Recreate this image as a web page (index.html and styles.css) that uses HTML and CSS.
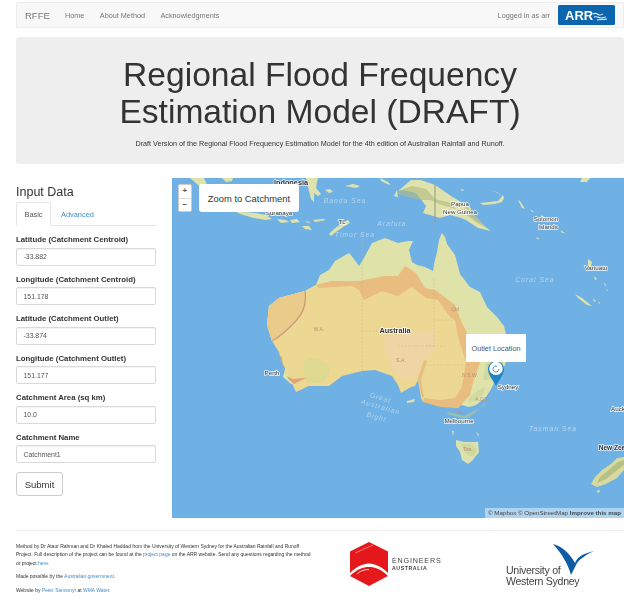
FILE: index.html
```html
<!DOCTYPE html>
<html lang="en">
<head>
<meta charset="utf-8">
<title>RFFE</title>
<link rel="stylesheet" href="styles.css">
</head>
<body>
<div class="page">
  <nav class="navbar">
    <a class="brand">RFFE</a>
    <a class="nav-link">Home</a>
    <a class="nav-link">About Method</a>
    <a class="nav-link">Acknowledgments</a>
    <span class="login">Logged in as arr</span>
    <a class="arr-logo">
      <svg width="57" height="20" viewBox="0 0 57 20">
        <rect width="57" height="20" rx="1.5" fill="#0d66ad"/>
        <text x="7" y="14.5" class="arr-text">ARR</text>
        <path d="M35 9c3-2 5 1 7 1s2-1 3-1M36 12c3-1 5 1 7 1s3-1 5-1M39 15c3-1 6 0 10-1" fill="none" stroke="#dbe9f5" stroke-width="1.2"/>
      </svg>
    </a>
  </nav>

  <header class="jumbotron">
    <h1>Regional Flood Frequency<br>Estimation Model (DRAFT)</h1>
    <p>Draft Version of the Regional Flood Frequency Estimation Model for the 4th edition of Australian Rainfall and Runoff.</p>
  </header>

  <main class="content">
    <section class="sidebar">
      <h3>Input Data</h3>
      <div class="tabs">
        <a class="tab active">Basic</a>
        <a class="tab">Advanced</a>
      </div>
      <form class="form">
        <label>Latitude (Catchment Centroid)</label>
        <div class="input">-33.882</div>
        <label>Longitude (Catchment Centroid)</label>
        <div class="input">151.178</div>
        <label>Latitude (Catchment Outlet)</label>
        <div class="input">-33.874</div>
        <label>Longitude (Catchment Outlet)</label>
        <div class="input">151.177</div>
        <label>Catchment Area (sq km)</label>
        <div class="input">10.0</div>
        <label>Catchment Name</label>
        <div class="input">Catchment1</div>
        <button type="button" class="submit">Submit</button>
      </form>
    </section>

    <section class="map">
      <svg class="map-svg" width="452" height="340" viewBox="172 178 452 340">
        <rect x="172" y="178" width="452" height="340" fill="#6fb1e4"/>
        <!-- Indonesia / PNG islands -->
        <g fill="#dfe2ac">
          <path d="M190 178l8 7 6 3 3-3-3-7zM222 178l4 4 6-1 1-3zM306 178l2 9 3 12 3 3 0-9 4 3 3-2-5-6 1-6 1-4zM325 190l5-1 3 3-4 1zM345 186l8-2 7 2-4 2zM380 178l8 4 3 3-4-1-6-3zM394 196l3-6 1 7zM582 178l-2 4h7l3-4z"/>
          <path d="M226 207l8 2 10 3 12 1 10 2 6 4-6 1-12-2-14-4-7-4zM277 219l9 1 3 2-8 1zM290 220l7-1 3 3-8 1zM305 221l6 1-3 1zM313 220l10-1 3 1-11 2zM302 226l7 0 3 4-7-1zM329 234l5-5 8-6 6-3 2 3-7 4-7 5-5 4z"/>
          <path d="M398 191l13-11h10l14 5 16 11 20 12-1 8 21 15-13-3-12-8-8-3-8-2-10 3-17-5 3-7-10-13-13-3z"/>
          <path d="M480 203l18-2 5-6 1 3-2 4-7 2-12 1zM489 190l8 2 6 5-7-5zM518 200l2 1 5 8-3-1zM530 209l4 3-2 0zM460 190l3-1 1 2zM541 215l5 3-4 0zM560 230l5 3-3 0zM536 237l4 2-3 0zM588 259l4 3-1 5-3-2zM594 276l3 3-2 1zM604 282l2 3-1 1zM606 288l2 3-1 0zM575 294l7 4 10 8-5-1-9-7zM593 298l3 3-2 1zM598 301l2 2-1 1z"/>
        </g>
        <path d="M398 191l14-5 14 3 9 10 16 4 5 6-14-4-12-5-10 0-12-3-10-3z" fill="#b2b97f" opacity=".6"/>
        <path d="M435 185v38" stroke="#8f9a8c" stroke-width="1" fill="none"/>
        <path d="M465 205l8 8 14 15-10-5-12-9z" fill="#bcc488" opacity=".8"/>

        <!-- Australia: green base -->
        <path d="M272 341l-5-16 2-19 10-8 26-7 11-6 4-10 9-5 6-9 14-8 5 6 5 7 5-8 8-15 13-5 13 5 10-2 5 0-4 9 3 12 5 3 8 2 8 4 1-7 3-12 2-12 3-7 3 4 2 7 8 11 5 19 10 13 10 5 7 15 10 10 7 9 3 12 2 12-3 12-4 10-5 5-6 12-5 8-10 8-7 2-25-7-5-3-5-12-4-12-3-16 1-9-3 7-3 16 2 9-6-4-4-9-4 6-8-4-4-5-17-5-13 1-20 5-13 10-20 0-15 9-9 0-8-7 3-12-1-15z" fill="#dfe3aa"/>
        <!-- interior -->
        <path d="M316 285L332 281 359 281 385 276 398 276 412 287 426 290 438 291 455 305 461 321 468 335 478 345 480 362 473 383 470 395 458 408 423 402 421 398 418 380 415 386 411 387 401 393 398 385 392 376 375 370 362 371 342 376 329 386 309 386 296 392 282 362 279 352 272 341 267 325 269 306 279 298 305 291Z" fill="#ecd892"/>
        <path d="M384 336L434 330 437 348 426 358 419 376 405 381 394 372 385 352Z" fill="#efd5a3"/>
        <!-- semi-arid band -->
        <path d="M316 285L332 281 359 281 385 276 398 276 405 266 416 273 425 288 435 290 455 305 461 321 468 335 478 345 480 362 473 383 470 395 458 408 440 407 423 402 424 398 440 400 455 398 462 387 466 362 458 337 455 320 451 318 438 300 426 298 412 287 398 296 382 291 364 300 359 290 352 286 319 288Z" fill="#e9bd80"/>
        <path d="M424 360L418 378 422 398 424 397 421 379 427 361Z" fill="#e9bd80"/>
        <!-- WA arc -->
        <path d="M272 341l-5-16 2-19 10-8 26-7c1 13-3 23-12 33-7 7-13 13-21 17z" fill="#ebcb8a"/>
        <path d="M305 291c2 15-3 24-12 33-7 7-13 13-21 17" fill="none" stroke="#cd9a78" stroke-width="1.3"/>
        <!-- SW corner -->
        <path d="M278 354l4 3 1 10 4 9 6 3 10-1 5-1-8 4-6 3-5-4-5-10-3-11z" fill="#dda678"/>
        <path d="M304 362l6-4 10 2 8 4 2 7-5 9-7 3-11 0-3-10z" fill="#dcd890" opacity=".8"/>
        <!-- SE ranges -->
        <path d="M487 345l8-4 6 3 3 10-1 10-6 10-8 6-6 0 2-12 2-10z" fill="#c5d394" opacity=".6"/>
        <path d="M448 412l16 4 12-6 8-4 2-4-8 8-10 8-6 0-15-4z" fill="#b9c98a" opacity=".6"/>
        <path d="M468 400l6-7 5-3 6-3-2 8-7 5-7 3z" fill="#c8d597" opacity=".6"/>
        <path d="M407 401l8-2-1 3-7 1zM452 431l2 0-1 5zM476 431l3 4-1 1z" fill="#dfe2ac"/>
        <!-- borders -->
        <path d="M362 232v146M362 331h36M434 279v67h-36M434 320h24M426 365h45M426 346l20 0" fill="none" stroke="#c9ad7e" stroke-width=".6" stroke-dasharray="2 1.5" opacity=".7"/>
        <!-- Tasmania, NZ -->
        <path d="M456 440l8 2 14 0 1 10-7 9-4 3-6-4-2-8-4-6z" fill="#dbe2ae"/>
        <path d="M461 444l10 0 6 5-3 8-6-2-5-5z" fill="#c9d596" opacity=".7"/>
        <path d="M624 457l-7 1-6 6-9 6-7 7-4 7 6 3 9-3 11-6 7-8z" fill="#d6d9a0"/>
        <path d="M618 462l-8 7-10 8-3 6 9-4 10-8 8-6v-5z" fill="#aeb87d" opacity=".8"/>
        <path d="M596 491l4-1-1 3z" fill="#dbe2ae"/>

        <!-- labels -->
        <g class="lbl">
          <text x="291" y="184.500" class="lbl-dark">Indonesia</text>
          <text x="279" y="215" class="lbl-sm">Surabaya</text>
          <text x="342" y="224" class="lbl-sm">TL</text>
          <text x="460" y="206" class="lbl-sm">Papua</text>
          <text x="460" y="214" class="lbl-sm">New Guinea</text>
          <text x="546" y="221" class="lbl-sm">Solomon</text>
          <text x="548" y="229" class="lbl-sm">Islands</text>
          <text x="596" y="270" class="lbl-sm">Vanuatu</text>
          <text x="395" y="333" class="lbl-dark">Australia</text>
          <text x="272" y="375" class="lbl-sm">Perth</text>
          <text x="508" y="389" class="lbl-sm">Sydney</text>
          <text x="459" y="423" class="lbl-sm">Melbourne</text>
          <text x="618" y="411" class="lbl-sm">Auck</text>
          <text x="612" y="450" class="lbl-dark lbl-nz">New Zea</text>
        </g>
        <g class="sea">
          <text x="345" y="203">Banda Sea</text>
          <text x="392" y="226">Arafura</text>
          <text x="355" y="237">Timor Sea</text>
          <text x="535" y="282">Coral Sea</text>
          <text x="553" y="431">Tasman Sea</text>
          <text x="380" y="400" transform="rotate(16 380 400)">Great</text>
          <text x="380" y="409" transform="rotate(16 380 409)">Australian</text>
          <text x="376" y="419" transform="rotate(16 376 419)">Bight</text>
        </g>
        <g class="state">
          <text x="319" y="331">W.A.</text>
          <text x="455" y="311">Qld</text>
          <text x="401" y="362">S.A.</text>
          <text x="470" y="377">N.S.W.</text>
          <text x="482" y="401">A.C.T.</text>
          <text x="460" y="414">Vic.</text>
          <text x="468" y="451">Tas.</text>
        </g>
        <!-- marker -->
        <path d="M496 386c-3-6-8-11-8-17a8 8 0 0 1 16 0c0 6-5 11-8 17z" fill="#1f85c8"/>
        <path d="M490 372c-1-3-1-5 1-8 3-3 7-3 10 0 2 3 2 5 1 8-2 2-3 3-6 3s-4-1-6-3z" fill="#fff"/>
        <path d="M499 369a3 3 0 1 1-2-2.800" fill="none" stroke="#3d8cc4" stroke-width="1"/>
      </svg>

      <div class="zoom-control">
        <a class="zoom-btn">+</a>
        <a class="zoom-btn">−</a>
      </div>
      <a class="zoom-catchment">Zoom to Catchment</a>
      <div class="popup">Outlet Location</div>
      <div class="attribution">© Mapbox © OpenStreetMap <b>Improve this map</b></div>
    </section>
  </main>

  <footer class="footer">
    <div class="credits">
      <p>Method by Dr Ataur Rahman and Dr Khaled Haddad from the University of Western Sydney for the Australian Rainfall and Runoff Project. Full description of the project can be found at the <a>project page</a> on the ARR website. Send any questions regarding the method or project <a>here</a>.</p>
      <p>Made possible by the <a>Australian government</a>.</p>
      <p>Website by <a>Peter Stensmyr</a> at <a>WMA Water</a>.</p>
    </div>
    <div class="logo-ea">
      <svg width="40" height="44" viewBox="0 0 40 44">
        <path d="M20 0L39 9.500V34L20 44 1 34V9.500z" fill="#e5191c"/>
        <path d="M1 31C7 25 14 21.500 20 21.500S33 25 39 31v3C32 27 26 25 20 25S8 27 1 34z" fill="#fff"/>
        <path d="M8 32c3-3 7-4.500 12-4.500" fill="none" stroke="#fff" stroke-width=".8"/>
        <path d="M6 11l18-8" stroke="#f58d8d" stroke-width=".8" fill="none"/>
      </svg>
      <div class="ea-text">
        <div class="ea-main">ENGINEERS</div>
        <div class="ea-sub">AUSTRALIA</div>
      </div>
    </div>
    <div class="logo-uws">
      <svg class="uws-bird" width="43" height="33" viewBox="0 0 43 33">
        <path d="M0 0C8 2 16 8 22 19 24 14 28 10 41 7 34 10 27 15 24 19 22 23 20 27 18 31 15 20 9 10 0 0z" fill="#0e5ca3"/>
      </svg>
      <div class="uws-text">University of<br>Western Sydney</div>
    </div>
  </footer>
</div>
</body>
</html>
```

FILE: styles.css
```css
* { box-sizing: border-box; }
html, body { margin: 0; padding: 0; background: #fff; }
body { font-family: "Liberation Sans", Arial, sans-serif; color: #333; overflow: hidden; }
.page { width: 624px; height: 606px; padding: 2px 0 0 16px; filter: blur(.4px); overflow: hidden; }

.navbar { height: 26px; background: #f8f8f8; border: 1px solid #ededed; border-radius: 2px; display: flex; align-items: center; padding-left: 8px; font-size: 7.250px; }
.brand { font-size: 9.500px; color: #777; width: 40px; }
.nav-link { color: #777; margin-right: 15.500px; }
.login { color: #777; margin-left: auto; margin-right: 8px; }
.arr-logo { display: block; height: 20px; margin-right: 8px; }
.arr-logo svg { display: block; }
.arr-text { font-size: 13px; font-weight: 700; fill: #fff; }

.jumbotron { height: 127px; margin-top: 9px; background: #eee; border-radius: 3px; text-align: center; padding-top: 20px; }
.jumbotron h1 { margin: 0; font-weight: 400; font-size: 33.600px; line-height: 36.500px; color: #333; }
.jumbotron p { margin: 9px 0 0; font-size: 7.200px; line-height: 10px; color: #333; }

.content { display: flex; margin-top: 14px; height: 340px; }
.sidebar { width: 140px; margin-right: 16px; flex: none; }
.sidebar h3 { margin: 6px 0 0; font-weight: 400; font-size: 12.500px; line-height: 16px; height: 18px; color: #333; }
.tabs { display: flex; height: 24px; border-bottom: 1px solid #e6e6e6; font-size: 7.400px; }
.tab { display: flex; align-items: center; justify-content: center; height: 24px; padding: 0 10px; color: #428bca; }
.tab.active { width: 35px; padding: 0; color: #555; background: #fff; border: 1px solid #e6e6e6; border-bottom-color: #fff; border-radius: 2px 2px 0 0; }
.form { display: flex; flex-direction: column; padding-top: 9px; }
.form label { font-size: 7.800px; font-weight: 700; line-height: 10px; height: 12.500px; color: #333; }
.input { height: 18px; margin-bottom: 9px; padding-left: 6.500px; display: flex; align-items: center; font-size: 6.900px; color: #555; border: 1px solid #d9d9d9; border-radius: 2px; box-shadow: inset 0 1px 1px rgba(0,0,0,.05); }
.submit { width: 47px; height: 24px; padding: 0; font-family: inherit; font-size: 9.500px; color: #333; background: #fff; border: 1px solid #ccc; border-radius: 3px; }

.map { position: relative; width: 452px; height: 340px; flex: none; overflow: hidden; }
.map-svg { display: block; }
.zoom-control { position: absolute; left: 6px; top: 6px; width: 13.500px; height: 28px; background: #fff; border: 1px solid #ccc; border-radius: 2px; display: flex; flex-direction: column; }
.zoom-btn { flex: 1; display: flex; align-items: center; justify-content: center; font-size: 8px; font-weight: 700; line-height: 1; color: #555; }
.zoom-btn:first-child { border-bottom: 1px solid #ddd; }
.zoom-catchment { position: absolute; left: 27px; top: 6px; width: 100px; height: 28px; display: flex; align-items: center; justify-content: center; background: #fff; border-radius: 3px; font-size: 9.400px; color: #333; }
.popup { position: absolute; left: 294px; top: 156px; width: 60px; height: 28px; display: flex; align-items: center; justify-content: center; background: #fff; font-size: 7.300px; color: #555; }
.attribution { position: absolute; right: 0; bottom: 0; height: 10px; padding: 0 3px; font-size: 6.200px; line-height: 10px; color: #444; background: rgba(255,255,255,.45); white-space: nowrap; }
.attribution b { color: #3a4a55; }

.lbl text { text-anchor: middle; paint-order: stroke; stroke: rgba(255,255,255,.85); stroke-width: 1.500px; fill: #333; }
.lbl-sm { font-size: 6.200px; }
.lbl-dark { font-size: 7.300px; font-weight: 700; }
.lbl-nz { font-size: 6.500px; }
.sea text { font-size: 6.800px; font-style: italic; letter-spacing: 1px; text-anchor: middle; fill: #b5d5ef; }
.state text { font-size: 5.200px; text-anchor: middle; fill: #b98f74; }

.footer { position: relative; margin-top: 12px; border-top: 1px solid #eee; display: grid; grid-template-columns: 300px 1fr 1fr; height: 70px; }
.credits { font-size: 4.980px; line-height: 8.500px; color: #333; padding-top: 10.500px; }
.credits p { margin: 0 0 5px; }
.credits a { color: #428bca; }
.logo-ea { display: flex; align-items: flex-start; padding: 11px 0 0 33px; }
.ea-text { margin-left: 3px; padding-top: 14.500px; color: #444; }
.ea-main { font-size: 7.200px; line-height: 8px; letter-spacing: .8px; }
.ea-sub { font-size: 5.200px; line-height: 7px; letter-spacing: .6px; font-weight: 700; }
.logo-uws { position: relative; padding: 33.500px 0 0 36px; }
.uws-bird { position: absolute; left: 83px; top: 12.500px; }
.uws-text { position: relative; font-size: 10.600px; line-height: 11px; letter-spacing: -.3px; color: #444; }
```
